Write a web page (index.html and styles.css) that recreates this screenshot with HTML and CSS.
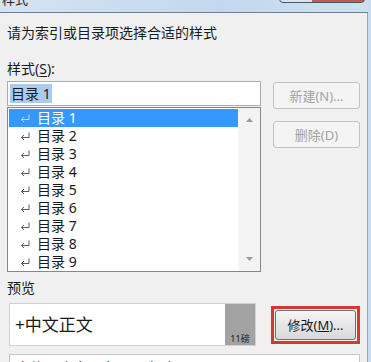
FILE: index.html
```html
<!DOCTYPE html>
<html lang="zh-CN">
<head>
    <meta charset="UTF-8">
    <meta name="viewport" content="width=device-width, initial-scale=1.0">
    <title>样式</title>
    <link rel="stylesheet" href="styles.css">
</head>
<body>

    <div class="window">
        <!-- Title bar -->
        <div class="titlebar">
            <span class="title">样式</span>
            <div class="close"></div>
        </div>

        <div class="dialog">
            <p class="prompt">请为索引或目录项选择合适的样式</p>
            <p class="label">样式(<u>S</u>):</p>

            <div class="styles-row">
                <div class="styles-left">
                    <div class="textbox"><span class="sel">目录 1</span></div>
                    <div class="listbox">
                        <ul class="items">
                            <li class="item active"><svg class="ret" viewBox="0 0 10 9"><path d="M9 0.5V5.5H1.5M4 3L1.3 5.5 4 8"/></svg>目录 1</li>
                            <li class="item"><svg class="ret" viewBox="0 0 10 9"><path d="M9 0.5V5.5H1.5M4 3L1.3 5.5 4 8"/></svg>目录 2</li>
                            <li class="item"><svg class="ret" viewBox="0 0 10 9"><path d="M9 0.5V5.5H1.5M4 3L1.3 5.5 4 8"/></svg>目录 3</li>
                            <li class="item"><svg class="ret" viewBox="0 0 10 9"><path d="M9 0.5V5.5H1.5M4 3L1.3 5.5 4 8"/></svg>目录 4</li>
                            <li class="item"><svg class="ret" viewBox="0 0 10 9"><path d="M9 0.5V5.5H1.5M4 3L1.3 5.5 4 8"/></svg>目录 5</li>
                            <li class="item"><svg class="ret" viewBox="0 0 10 9"><path d="M9 0.5V5.5H1.5M4 3L1.3 5.5 4 8"/></svg>目录 6</li>
                            <li class="item"><svg class="ret" viewBox="0 0 10 9"><path d="M9 0.5V5.5H1.5M4 3L1.3 5.5 4 8"/></svg>目录 7</li>
                            <li class="item"><svg class="ret" viewBox="0 0 10 9"><path d="M9 0.5V5.5H1.5M4 3L1.3 5.5 4 8"/></svg>目录 8</li>
                            <li class="item"><svg class="ret" viewBox="0 0 10 9"><path d="M9 0.5V5.5H1.5M4 3L1.3 5.5 4 8"/></svg>目录 9</li>
                        </ul>
                        <div class="scrollbar">
                            <svg class="arrow" viewBox="0 0 7 4"><path d="M0 4L3.5 0 7 4Z"/></svg>
                            <svg class="arrow" viewBox="0 0 7 4"><path d="M0 0L3.5 4 7 0Z"/></svg>
                        </div>
                    </div>
                </div>
                <div class="styles-right">
                    <button class="btn" disabled>新建(N)...</button>
                    <button class="btn" disabled>删除(D)</button>
                </div>
            </div>

            <p class="label preview-label">预览</p>

            <div class="preview-row">
                <div class="preview">
                    <span class="preview-text">+中文正文</span>
                    <div class="preview-size"><span>11磅</span></div>
                </div>
                <div class="highlight">
                    <button class="btn btn-modify">修改(<u>M</u>)...</button>
                </div>
            </div>

            <div class="desc">字体: +中文正文, 11 磅, 左</div>
        </div>
    </div>

</body>
</html>
```

FILE: styles.css
```css
body {
    margin: 0;
    width: 371px;
    height: 362px;
    overflow: hidden;
    font-family: "Noto Sans", "Noto Sans CJK SC", sans-serif;
    color: #1a1a1a;
    background-color: #c9dcef;
}

p {
    margin: 0;
}

.window {
    height: 362px;
    display: flex;
    flex-direction: column;
    padding-right: 3px;
}

/* Title bar */
.titlebar {
    height: 12px;
    flex-shrink: 0;
    position: relative;
    overflow: hidden;
    background: linear-gradient(to right, #d3e3f2, #c3d8ee 60%, #cfe0f1);
    border-bottom: 1px solid #6f7f92;
}

.title {
    display: block;
    margin-top: -9px;
    margin-left: 2px;
    font-size: 13px;
    line-height: 16px;
    color: #222;
}

.close {
    position: absolute;
    top: -6px;
    right: 3px;
    width: 84px;
    height: 7px;
    border: 1px solid #4a5766;
    border-radius: 0 0 4px 4px;
    background: linear-gradient(to right, #d8e4ef 0, #d8e4ef 38%, #c45a4c 38%, #c45a4c 100%);
}

/* Dialog body */
.dialog {
    flex: 1;
    background-color: #f0f0f0;
    border-right: 1px solid #9aa6b3;
    padding: 10px 7px 0 7px;
    font-size: 14px;
}

.prompt {
    line-height: 20px;
}

.label {
    line-height: 20px;
    margin-top: 16px;
}

.label u {
    text-underline-offset: 2px;
}

.styles-row {
    display: flex;
    gap: 12px;
    margin-top: 2px;
}

.styles-left {
    width: 254px;
    display: flex;
    flex-direction: column;
    gap: 1px;
}

.textbox {
    border: 1px solid #abadb3;
    background-color: #fff;
    padding: 2px 2px 0 2px;
    height: 21px;
}

.sel {
    display: inline-block;
    background-color: #a8cbee;
    line-height: 19px;
    padding: 0 1px;
}

.listbox {
    display: flex;
    height: 163px;
    border: 1px solid #828790;
    background-color: #fff;
}

.items {
    list-style: none;
    margin: 0;
    padding: 1px 0 0 1px;
    flex: 1;
}

.item {
    height: 18px;
    line-height: 18px;
    display: flex;
    align-items: center;
    padding-left: 11px;
    gap: 7px;
}

.item.active {
    background-color: #3399ff;
    color: #fff;
}

.ret {
    width: 10px;
    height: 9px;
    fill: none;
    stroke: #5a5a5a;
    stroke-width: 1;
}

.item.active .ret {
    stroke: #b8dcff;
}

.scrollbar {
    width: 21px;
    background-color: #f3f3f3;
    border-left: 1px solid #f8f8f8;
    display: flex;
    flex-direction: column;
    justify-content: space-between;
    align-items: center;
    padding: 10px 0 10px 0;
}

.arrow {
    width: 7px;
    height: 4px;
    fill: #9a9a9a;
}

.styles-right {
    display: flex;
    flex-direction: column;
    gap: 12px;
    padding-top: 1px;
}

.btn {
    width: 87px;
    height: 27px;
    font-family: inherit;
    font-size: 13px;
    border: 1px solid #c2c2c2;
    border-radius: 3px;
    background-color: #f4f4f4;
    color: #a3a3a3;
    padding: 0;
}

.preview-label {
    margin-top: 6px;
}

.preview-row {
    display: flex;
    align-items: center;
    gap: 15px;
    margin-top: 5px;
}

.preview {
    margin-left: 2px;
    width: 247px;
    height: 41px;
    border: 1px solid #d2d2d2;
    background-color: #fff;
    display: flex;
    align-items: center;
}

.preview-text {
    flex: 1;
    font-size: 17px;
    padding-left: 5px;
    padding-bottom: 2px;
}

.preview-size {
    width: 30px;
    height: 100%;
    background-color: #a2a2a2;
    display: flex;
    align-items: flex-end;
    justify-content: center;
}

.preview-size span {
    font-size: 9px;
    line-height: 13px;
    color: #1a1a1a;
}

.highlight {
    border: 3px solid #d23a3a;
    padding: 1px;
    display: flex;
}

.btn-modify {
    width: 81px;
    height: 30px;
    border: 1px solid #707070;
    background: linear-gradient(#f5f5f5, #e6e6e6 50%, #d8d8d8);
    color: #1a1a1a;
}

.desc {
    margin-top: 8px;
    margin-left: 2px;
    height: 20px;
    border: 1px solid #c6c6c6;
    background-color: #fff;
    padding: 4px 0 0 6px;
    font-size: 14px;
    line-height: 18px;
}
```
